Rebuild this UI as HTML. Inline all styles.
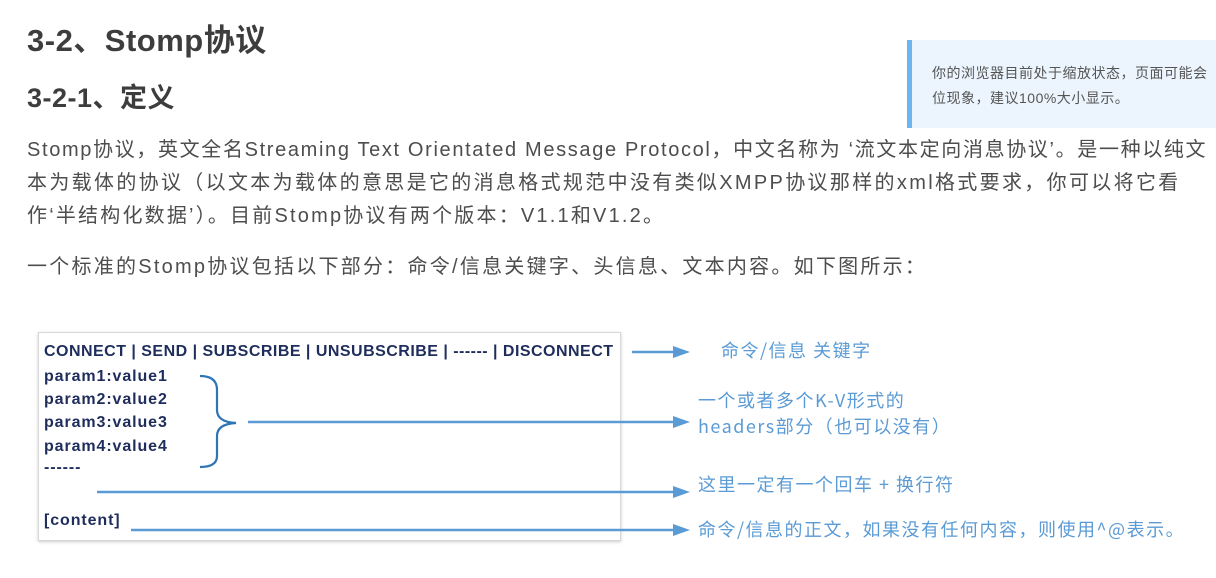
<!DOCTYPE html>
<html><head><meta charset="utf-8"><style>
body{margin:0;width:1216px;height:578px;background:#fff;position:relative;overflow:hidden;font-family:"Liberation Sans","Noto Sans CJK SC",sans-serif;color:#404040}
.a{position:absolute;white-space:nowrap}
.p{font-size:20px;color:#4d4d4d;left:27px;letter-spacing:2.25px}
.d{font-family:"Liberation Sans","Noto Sans CJK SC",sans-serif;font-weight:bold;font-size:16px;color:#1f2d5c;left:44px;letter-spacing:0.9px}
.r{font-size:18px;color:#5b9bd5;font-family:"Noto Sans CJK SC",sans-serif;letter-spacing:1.5px}
</style></head><body>
<div class="a" style="left:27px;top:15px;font-size:31px;font-weight:bold;color:#3d3d3d;letter-spacing:0.5px">3-2、Stomp协议</div>
<div class="a" style="left:27px;top:76px;font-size:27px;font-weight:bold;color:#3d3d3d;letter-spacing:0.5px">3-2-1、定义</div>
<div class="a" style="left:907px;top:40px;width:309px;height:88px;background:#ecf5fe;border-left:5px solid #6cb6f0;box-sizing:border-box"></div>
<div class="a" style="left:932px;top:61px;font-size:14px;color:#555;line-height:25px;letter-spacing:0.5px">你的浏览器目前处于缩放状态，页面可能会<br>位现象，建议100%大小显示。</div>
<div class="a p" style="top:133px;letter-spacing:1.65px">Stomp协议，英文全名Streaming Text Orientated Message Protocol，中文名称为 ‘流文本定向消息协议’。是一种以纯文</div>
<div class="a p" style="top:166px;letter-spacing:2.33px">本为载体的协议（以文本为载体的意思是它的消息格式规范中没有类似XMPP协议那样的xml格式要求，你可以将它看</div>
<div class="a p" style="top:199px;letter-spacing:2.2px">作‘半结构化数据’）。目前Stomp协议有两个版本：V1.1和V1.2。</div>
<div class="a p" style="top:250px">一个标准的Stomp协议包括以下部分：命令/信息关键字、头信息、文本内容。如下图所示：</div>
<div class="a" style="left:38px;top:332px;width:583px;height:209px;border:1px solid #d8d8d8;box-shadow:0 1px 3px #ccc;box-sizing:border-box"></div>
<div class="a d" style="top:343px;letter-spacing:0.48px">CONNECT | SEND | SUBSCRIBE | UNSUBSCRIBE | ------ | DISCONNECT</div>
<div class="a d" style="top:368px">param1:value1</div>
<div class="a d" style="top:391px">param2:value2</div>
<div class="a d" style="top:414px">param3:value3</div>
<div class="a d" style="top:438px">param4:value4</div>
<div class="a d" style="top:459px">------</div>
<div class="a d" style="top:512px">[content]</div>
<svg class="a" style="left:0;top:0" width="1216" height="578">
<path d="M200 376 Q217 376 217 390 L217 410 Q217 422 236 423 Q217 424 217 436 L217 456 Q217 467 200 467" fill="none" stroke="#2e75b6" stroke-width="2.2"/>
<g stroke="#5b9bd5" stroke-width="2.5"><line x1="632" y1="352" x2="675" y2="352"/><line x1="248" y1="422" x2="675" y2="422"/><line x1="97" y1="492" x2="675" y2="492"/><line x1="131" y1="530" x2="675" y2="530"/></g>
<g fill="#5b9bd5"><path d="M673 346 L690 352 L673 358Z"/><path d="M673 416 L690 422 L673 428Z"/><path d="M673 486 L690 492 L673 498Z"/><path d="M673 524 L690 530 L673 536Z"/></g>
</svg>
<div class="a r" style="left:721px;top:337px">命令/信息 关键字</div>
<div class="a r" style="left:698px;top:387px">一个或者多个K-V形式的</div>
<div class="a r" style="left:698px;top:413px">headers部分（也可以没有）</div>
<div class="a r" style="left:698px;top:471px">这里一定有一个回车 + 换行符</div>
<div class="a r" style="left:698px;top:516px">命令/信息的正文，如果没有任何内容，则使用^@表示。</div>
</body></html>
